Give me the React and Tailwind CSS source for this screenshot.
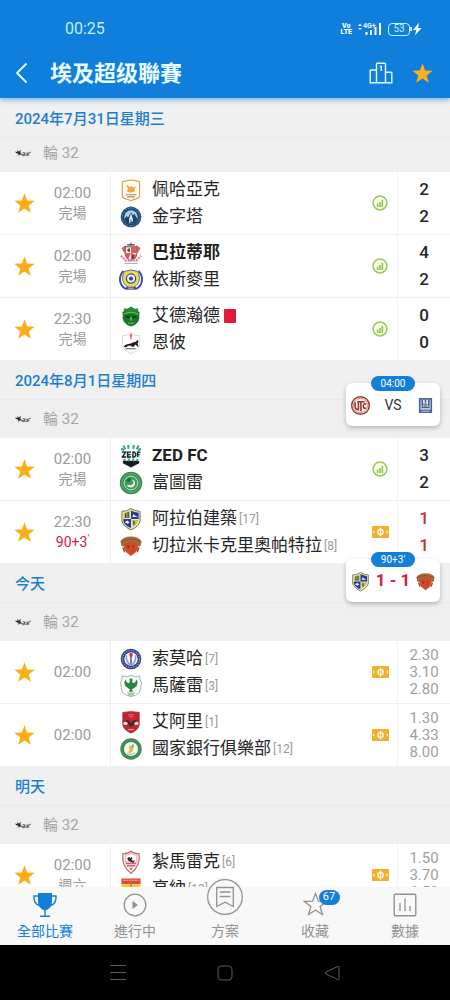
import React from "react";

const STAR = "M12 1.4l2.750 7.400 7.850.3-6.150 4.900 2.150 7.600L12 17.300 5.400 21.600l2.150-7.600L1.400 9.100l7.850-.3z";

function Star({ className }) {
  return (
    <svg viewBox="0 0 24 24" className={className} aria-hidden="true">
      <path d={STAR} fill="#fcae18" />
    </svg>
  );
}

const crests = {
  pharco: (
    <>
      <path d="M3 3.500Q12 0 21 3.500V18q0 2.500-3 3l-6 2-6-2q-3-.5-3-3z" fill="#fffdf8" stroke="#dda646" strokeWidth="1.300" />
      <path d="M7 6.500c2 .5 3 2 4 3l1-2 2 1.500 3.500-.5-2 2.500 1 2-3 1.500h-4L7 12.500l2-1z" fill="#f2a83a" />
      <path d="M6.500 17h11M8 19.200h8" stroke="#8f8a80" strokeWidth="1.100" />
    </>
  ),
  pyramids: (
    <>
      <circle cx="12" cy="12" r="10.800" fill="#1d4571" />
      <circle cx="12" cy="12" r="9.200" fill="none" stroke="#7796b8" strokeWidth="1" strokeDasharray="1.500 1" />
      <circle cx="12" cy="12" r="7" fill="#a9d2f2" />
      <path d="M5.300 14l2.200-3 1.500 1.500L12 7l2 3.500 1.500-2 3.200 5.500a7 7 0 0 1-13.400 0z" fill="#1c416c" />
      <path d="M10 14l2-6 2 6v3h-1.500v-2h-1v3H10z" fill="#dcebf8" />
      <circle cx="12" cy="1.300" r="1" fill="#6d7f99" />
    </>
  ),
  baladiyat: (
    <>
      <path d="M12 0l1.500 4h-3zM2 7l4-3 3 3-4 5zM22 7l-4-3-3 3 4 5z" fill="#d9636a" />
      <path d="M6 5.500h12V14q0 4-6 6-6-2-6-6z" fill="#fbeeee" stroke="#6c4347" strokeWidth="1" />
      <path d="M12 5.500V12H6v2q1 3 3 4.500L12 12h6V5.500zM12 12v8q5-2 6-6z" fill="#dc5a61" />
      <path d="M8 3.500h8M10 7v4M8 9h3M14 14v4" stroke="#3c3436" strokeWidth="1.300" />
      <path d="M1.500 15l5 5h11l5-5" fill="none" stroke="#df8388" strokeWidth="2.400" strokeDasharray="2 1" />
      <path d="M5 22.800h14" stroke="#a498c4" strokeWidth="1" />
    </>
  ),
  ismaily: (
    <>
      <path d="M4 2.500C-1.500 9-.5 17 6 21h12c6.500-4 7.500-12 2-18.500" fill="none" stroke="#3d4fa5" strokeWidth="2" />
      <path d="M5 3c-3.500 7-2 13 4 16.500h6c6-3.500 7.500-9.500 4-16.500l-7-1.500z" fill="#e9dd48" stroke="#4f61a4" strokeWidth="1" />
      <circle cx="12" cy="10.500" r="4.800" fill="#f4f6fc" stroke="#31479d" strokeWidth="1.300" />
      <path d="M12 8l2.400 1.800-.9 2.800h-3l-.9-2.800z" fill="#31479d" />
      <path d="M7 20.500h10" stroke="#31479d" strokeWidth="2.500" />
      <path d="M9 20.500h6" stroke="#e7dc58" strokeWidth="1" />
    </>
  ),
  masry: (
    <>
      <path d="M5 4l3 .5L12 2l4 2.500 3-.5 1 4H4z" fill="#2a8a36" />
      <path d="M3 7.500h18l-.5 5 .5 1-1.500 4.500Q17 21.500 12 23q-5-1.500-7.500-5L3 13.500l.5-1z" fill="#15762a" />
      <path d="M4.500 10q7.500-3.500 15 0" fill="none" stroke="#5fba55" strokeWidth="1.300" />
      <path d="M6.500 13q2-1 4 1M17.500 13q-2-1-4 1" stroke="#083e12" strokeWidth="2" />
      <path d="M8 17.500q4 2.500 8 0l-1 2.500-3 1-3-1z" fill="#4da646" />
      <path d="M12 13v4" stroke="#8fd27c" strokeWidth="1.200" />
    </>
  ),
  enppi: (
    <>
      <path d="M3 4.500q5 0 9-3 4 3 9 3V15q-1 5-9 8-8-3-9-8z" fill="#fff" stroke="#d6d6d6" />
      <path d="M11.300 3l.7-1.500.7 1.500 1 1.500-1 1V8h-1.400V5.500l-1-1z" fill="#d9644d" />
      <path d="M4 16q1.500-2.500 5-3 3 0 5-1.500l3-.8 2-2 .8 2-1 1.500 1.200 4.300-2-1.500-1.500-1.500-1.500 2.500h-3l1-1.200-4 .2-2 1.500z" fill="#1d1d1f" />
      <path d="M6 18h11" stroke="#6f6f72" strokeWidth="1.200" />
    </>
  ),
  zed: (
    <>
      <path d="M4 1l2 4M9 .5l.5 4M15 .5l-.5 4M20 1l-2 4M1.500 4.500L5 6M22.500 4.500L19 6" stroke="#3ba883" strokeWidth="2.200" />
      <path d="M3.500 17h17v2.500L12 24l-8.500-4.500z" fill="#161b1b" />
      <path d="M1.500 7h21v7h-21z" fill="#e2f4ec" />
      <path d="M2.500 8h4l-3.500 5h4M12 8H8.500v5H12M8.500 10.500h3M14 8v5h1.500l1.500-1.500v-2L15.500 8zM22 8h-3v5M19 10.500h2" fill="none" stroke="#152220" strokeWidth="1.400" />
      <path d="M5 15l1 2M9.500 14.500l.5 3M14.500 14.500l-.5 3M19 15l-1 2" stroke="#3ba883" strokeWidth="2" />
    </>
  ),
  future: (
    <>
      <circle cx="12" cy="12" r="11.700" fill="#368a50" />
      <circle cx="12" cy="12" r="9.700" fill="none" stroke="#6db881" strokeWidth="1" />
      <circle cx="12" cy="12" r="7.200" fill="#3f9d59" stroke="#cfe8d5" strokeWidth="1" />
      <path d="M7.500 14c2 3.500 7 3.500 8.500 0 1-3-.5-5.500-3-5.500l1.300 2.200c.3 2-.8 3.300-2.300 3.300z" fill="#e4f5e8" />
      <path d="M7 9l3.500-3 1.500 2.500-2.500 3z" fill="#1c6d38" />
    </>
  ),
  arab: (
    <>
      <path d="M2.500 4q5.500 0 9.500-3 4 3 9.500 3v10q-1 5.500-9.500 9.500-8.500-4-9.500-9.500z" fill="#ece7ae" stroke="#6b7350" />
      <path d="M12 3q3.500 2 8 2.500V12h-8zM4 12h8v9.500Q5 18.500 4 14z" fill="#273b9c" />
      <path d="M4.500 5.500q4-.3 6.500-2V11H4.500zM13 13h6.500q-.5 4.500-5.500 7z" fill="#c6bd58" />
      <path d="M6.500 6v5M9 5v6M15 14v4" stroke="#333d4e" strokeWidth="1.300" />
      <path d="M13.500 10l1-3 2 1.500 2.500 1.500zM5.500 15.500l2.500-2 2.500 2-2 1.500z" fill="#f3f5fc" />
    </>
  ),
  cleopatra: (
    <>
      <path d="M1 7q3-5 11-5t11 5l-1 5-4 1v-3H6v3l-4-1z" fill="#a8693a" />
      <path d="M2 7.500q10-5 20 0" fill="none" stroke="#6b5a42" strokeWidth="1.300" strokeDasharray="2 1" />
      <path d="M5.500 9q6.500-3 13 0l1 6-3 4-4.500 3.500L7.500 19l-3-4z" fill="#d24a2e" />
      <path d="M8 11l3 1-1 3-2-1zM16 11l-3 1 2 4-3 3" fill="#9c3424" />
      <path d="M3.500 13.500l2 5M20.500 13.500l-2 5" stroke="#9a4a2d" strokeWidth="1.500" />
    </>
  ),
  smouha: (
    <>
      <circle cx="12" cy="12" r="10.800" fill="#343f88" />
      <circle cx="12" cy="12" r="8.900" fill="none" stroke="#9ba3cc" strokeWidth="1.200" strokeDasharray="1.400 1.200" />
      <circle cx="12" cy="12" r="7" fill="#f5f7fd" />
      <path d="M7 8q0 9 5 10 5-1 5-10" fill="none" stroke="#7c9acb" strokeWidth="1.600" />
      <path d="M12 10v7" stroke="#3b437d" strokeWidth="1.400" />
      <path d="M12 5l2 2-1 3h-2l-1-3z" fill="#d6344c" />
    </>
  ),
  masri: (
    <>
      <path d="M3 1.500q4 2 9-.5 5 2.500 9 .5 0 4 2 7-1 7-2 10-4 4-9 4.500-5-.5-9-4.500Q2 15 1 8.500q2-3 2-7z" fill="#fff" stroke="#8cba94" strokeWidth="1" />
      <path d="M12 4l1.800 1.300-.8 2 1.500 1.700 2-1 1-3 1.500 3-1 4-3.500 2.500-1.500 1 1 2.500h-4l1-2.500-1.500-1L6 12 5 8l1.500-3 1 3 2 1L11 7.300l-.8-2z" fill="#26863e" />
      <path d="M8 19.500h8M9 21.300h6" stroke="#63a474" strokeWidth="1" />
    </>
  ),
  ahly: (
    <>
      <path d="M3.500 2Q12 .5 20.500 2v13q-1 5.500-8.500 8.500-7.500-3-8.500-8.500z" fill="#c42331" stroke="#a02b38" strokeWidth="1" />
      <path d="M9 4.500h6M10 6.500h4" stroke="#e8747c" strokeWidth="1" />
      <path d="M6 10l3.500.5 2.500 3 2.500-3L18 10l-1.500 3-2 1.500-1 2h-3l-1-2-2-1.500z" fill="#3b2a2e" />
      <ellipse cx="6.300" cy="13.500" rx="2.200" ry="1.700" fill="#f3dede" />
      <ellipse cx="17.700" cy="13.500" rx="2.200" ry="1.700" fill="#f3dede" />
      <path d="M9 20h6" stroke="#f0b3b6" strokeWidth="1" />
    </>
  ),
  bank: (
    <>
      <circle cx="12" cy="12" r="11.200" fill="#3c8750" />
      <circle cx="12" cy="12" r="9.500" fill="none" stroke="#64a375" strokeWidth=".9" strokeDasharray="1.500 1" />
      <circle cx="12" cy="12" r="7.400" fill="#f8faef" />
      <path d="M9.500 8l2.500 1.500L14.500 7l-1 4 1 2.500-3 3-2.500-1 1.500-2.500z" fill="#e0b958" />
      <path d="M13 8l1.500-1.500L15 10l-2 2z" fill="#7aa86a" />
      <path d="M8 16.500q4 3 8-1" fill="none" stroke="#8ab792" strokeWidth="1" />
    </>
  ),
  zamalek: (
    <>
      <path d="M12 .8q2 2.200 8.500 2.700 1.500 13-8.500 20.200Q2 16.500 3.500 3.500 10 3 12 .8z" fill="#fbf3f3" stroke="#c56871" strokeWidth="1.300" />
      <path d="M6 5q4-.5 6-2 2 1.500 6 2l.2 7H5.800z" fill="#fff" stroke="#d99299" strokeWidth=".8" />
      <path d="M8 8.500l2-2 1.500 1.500 1-1.500 1 2-1 1 1.500 1.500 2-1-1.500 3-3.500-1.500-2-1z" fill="#2b2427" />
      <path d="M6.500 13.500h11M7.500 16h9" stroke="#d0626b" strokeWidth="1.600" />
      <path d="M10 18l2 3 2-3z" fill="#cf6670" />
    </>
  ),
  gouna: (
    <>
      <path d="M2 1h20v6H2z" fill="#e2483c" />
      <path d="M2 7h20v10q-4 5-10 6-6-1-10-6z" fill="#f6cb32" />
      <path d="M4 3h16" stroke="#f4a79d" strokeWidth="1.500" strokeDasharray="2 1" />
      <path d="M12 5v9" stroke="#a67c1f" strokeWidth="1.500" />
    </>
  ),
  utc: (
    <>
      <circle cx="12" cy="12" r="10.700" fill="#fff6f2" stroke="#97382f" strokeWidth="1.800" />
      <circle cx="12" cy="12" r="8.600" fill="none" stroke="#ad5a50" strokeWidth=".8" />
      <path d="M5.500 8v5q0 4 4 4V8M8 7.500h9M12.500 8v11M19 10.500q-3.500-2-3.500 2t3.500 2.500" fill="none" stroke="#973329" strokeWidth="1.900" />
    </>
  ),
  alianza: (
    <>
      <path d="M4 3h16v18H4z" fill="#4a6290" />
      <path d="M6 5h12v12H6z" fill="#dfe7f4" />
      <path d="M8 5v8M12 5v3M16 5v8M7 14.500h10" stroke="#415888" strokeWidth="1.800" />
      <path d="M9 10l3-2 3 3-2 3h-3z" fill="#80929f" />
      <path d="M7 19h10" stroke="#b4c0d9" strokeWidth="1.300" />
    </>
  ),
};

function Crest({ id, className }) {
  return (
    <svg viewBox="0.5 0.5 23 23" className={className} overflow="visible" aria-hidden="true">
      {crests[id]}
    </svg>
  );
}

function StatsIcon() {
  return (
    <svg viewBox="0 0 16 16" className="size-4" aria-hidden="true">
      <circle cx="8" cy="8" r="6.900" fill="#fbfff2" stroke="#9acb58" strokeWidth="1.500" />
      <path d="M5.600 8.500v3.500M8 7v5M10.400 4.800V12" stroke="#8cc63f" strokeWidth="1.600" />
    </svg>
  );
}

function PitchIcon() {
  return (
    <svg viewBox="0 0 17 12" className="h-3 w-[17px]" aria-hidden="true">
      <rect width="17" height="12" rx="1" fill="#eeb02f" />
      <circle cx="8.500" cy="6" r="2.600" fill="none" stroke="#fff6da" strokeWidth="1.500" />
      <path d="M8.500 1.500v9M1.800 4.700v2.600M15.200 4.700v2.600" stroke="#fff6da" strokeWidth="1.200" />
    </svg>
  );
}

function LeagueMark() {
  return (
    <svg viewBox="0 0 16 8" className="h-2 w-4" aria-hidden="true">
      <path d="M0 2.500l2.500.5L2.300 1l1.700 1.500L6 .8 5.300 3.200 7.500 6.500 5 5.200 3.500 7 3.300 4.800 1 4z" fill="#2f2f2f" />
      <path d="M7.500 3.700h2v3h-2v-1.300h2M11 3.700v3M11 6.500h1.500v-2.800M13.700 6.700v-3H15M15 3.200h1" fill="none" stroke="#5a5a5a" strokeWidth=".9" />
    </svg>
  );
}

const sections = [
  {
    date: "2024年7月31日星期三",
    matches: [
      { time: "02:00", status: "完場", home: ["pharco", "佩哈亞克"], away: ["pyramids", "金字塔"], score: ["2", "2"] },
      { time: "02:00", status: "完場", home: ["baladiyat", "巴拉蒂耶"], away: ["ismaily", "依斯麥里"], score: ["4", "2"], winner: true },
      { time: "22:30", status: "完場", home: ["masry", "艾德瀚德"], away: ["enppi", "恩彼"], score: ["0", "0"], redCard: true },
    ],
  },
  {
    date: "2024年8月1日星期四",
    matches: [
      { time: "02:00", status: "完場", home: ["zed", "ZED FC"], away: ["future", "富圖雷"], score: ["3", "2"], winner: true },
      { time: "22:30", status: "90+3", live: true, home: ["arab", "阿拉伯建築", "[17]"], away: ["cleopatra", "切拉米卡克里奧帕特拉", "[8]"], score: ["1", "1"] },
    ],
  },
  {
    date: "今天",
    matches: [
      { time: "02:00", home: ["smouha", "索莫哈", "[7]"], away: ["masri", "馬薩雷", "[3]"], odds: ["2.30", "3.10", "2.80"] },
      { time: "02:00", home: ["ahly", "艾阿里", "[1]"], away: ["bank", "國家銀行俱樂部", "[12]"], odds: ["1.30", "4.33", "8.00"] },
    ],
  },
  {
    date: "明天",
    matches: [
      { time: "02:00", status: "週六", home: ["zamalek", "紮馬雷克", "[6]"], away: ["gouna", "高納", "[13]"], odds: ["1.50", "3.70", "6.50"] },
    ],
  },
];

function Team({ team, bold, redCard }) {
  const [crest, name, rank] = team;
  return (
    <div className="flex h-[27px] items-center whitespace-nowrap">
      <Crest id={crest} className="size-[22px] shrink-0" />
      <span className={bold ? "ml-2.5 text-[17px] font-bold text-[#1f1f1f]" : "ml-2.5 text-[17px] text-[#262626]"}>{name}</span>
      {rank && <span className="ml-0.5 text-xs text-[#9b9b9b]">{rank}</span>}
      {redCard && <span className="ml-1 h-3.5 w-3 rounded-[1px] bg-[#e01b36]" />}
    </div>
  );
}

function Match({ match }) {
  return (
    <li className="flex items-stretch bg-white">
      <button type="button" aria-label="收藏" className="flex w-12 shrink-0 items-center justify-center">
        <Star className="size-[23px]" />
      </button>
      <div className="flex w-[63px] shrink-0 flex-col items-center justify-center border-r border-[#f0f0f0] pr-[13px] text-[#9a9a9a]">
        <span className="text-[15px] leading-5">{match.time}</span>
        {match.status && (
          <span className={match.live ? "text-sm leading-5 text-[#d5203c]" : "text-sm leading-5"}>
            {match.status}
            {match.live && <sup className="text-[10px]">'</sup>}
          </span>
        )}
      </div>
      <div className="min-w-0 flex-1 py-1 pl-[9px]">
        <Team team={match.home} bold={match.winner} redCard={match.redCard} />
        <Team team={match.away} />
      </div>
      <div className="flex w-9 shrink-0 items-center justify-center pl-0.5">
        {match.score && !match.live ? <StatsIcon /> : <PitchIcon />}
      </div>
      <div className="flex w-[53px] shrink-0 flex-col items-center justify-center border-l border-[#f4f4f4]">
        {match.score
          ? match.score.map((value, i) => (
              <span key={i} className={match.live ? "text-[17px] leading-[27px] font-medium text-[#d5203c]" : "text-[17px] leading-[27px] font-medium text-[#262626]"}>
                {value}
              </span>
            ))
          : match.odds.map((value) => (
              <span key={value} className="text-[15px] leading-[17px] text-[#a0a0a0]">{value}</span>
            ))}
      </div>
    </li>
  );
}

function Section({ section, first }) {
  return (
    <section>
      <h2 className="relative flex h-10 items-center border-b border-[#e9e9e9] bg-[#f0f0f0] px-[15px] pt-1 text-[15px] font-medium text-[#1c7dd0]">
        {section.date}
      </h2>
      <div className={first ? "-mt-1 flex h-[38px] items-center gap-3 bg-[#efefef] px-[15px] text-[15px] text-[#a6a6a6]" : "flex h-[38px] items-center gap-3 bg-[#efefef] px-[15px] text-[15px] text-[#a6a6a6]"}>
        <LeagueMark />
        <span>輪 32</span>
      </div>
      <ul className="divide-y divide-[#efefef]">
        {section.matches.map((match, i) => (
          <Match key={i} match={match} />
        ))}
      </ul>
    </section>
  );
}

function FloatingCard({ label, home, away, children }) {
  return (
    <button type="button" className="relative flex h-[43px] w-[94px] items-center justify-between rounded-md bg-white px-[5px] pt-px shadow-[0_2px_5px_rgba(0,0,0,0.24)]">
      <span className="absolute -top-[7px] left-1/2 flex h-[15px] w-11 -translate-x-1/2 items-center justify-center rounded-full bg-[#137fd9] text-[10px] text-white">
        {label}
      </span>
      <Crest id={home} className="size-[19px]" />
      {children}
      <Crest id={away} className="size-[19px]" />
    </button>
  );
}

function StatusBar() {
  return (
    <div className="flex h-12 items-center justify-between pt-2.5 pr-7 pl-[65px] text-base text-[#c5f0ff]">
      <time>00:25</time>
      <div className="flex items-center gap-1.5">
        <span className="flex flex-col text-center text-[7px] leading-[6px] font-black text-white">
          <span>Vo</span>
          <span>LTE</span>
        </span>
        <svg viewBox="0 0 24 14" className="h-3.5 w-6" aria-label="4G">
          <path d="M0 4l2-2.500L4 4zM0 6h4L2 8z" fill="#d9f3ff" />
          <text x="5" y="6" fontSize="7" fontWeight="700" fontFamily="Roboto, sans-serif" fill="#e6f7ff">4G+</text>
          <path d="M8.500 10v3M13 8v5M17.500 5v8M22 1v12" stroke="#fff" strokeWidth="2" />
        </svg>
        <div className="flex items-center">
          <span className="flex h-[13px] w-[22px] items-center justify-center rounded-[4px] border border-[#c5f0ff] text-[10px] leading-none">53</span>
          <span className="h-1 w-0.5 bg-[#c5f0ff]" />
          <svg viewBox="0 0 10 14" className="h-3.5 w-2.5" aria-hidden="true">
            <path d="M7 .5L1 8h3.300L3 13.500 9.500 6H6z" fill="#fff" />
          </svg>
        </div>
      </div>
    </div>
  );
}

function TabItem({ label, active, children }) {
  return (
    <a href="#" className={active ? "flex flex-1 flex-col items-center text-[#137fd9]" : "flex flex-1 flex-col items-center text-[#929292]"}>
      <span className="flex h-[35px] items-center justify-center">{children}</span>
      <span className="text-sm leading-[18px]">{label}</span>
    </a>
  );
}

function TabBar() {
  return (
    <nav className="relative flex h-[58px] shrink-0 bg-[#f8f8f8]">
      <TabItem label="全部比賽" active>
        <svg viewBox="0 0 26 26" className="size-[26px]" aria-hidden="true">
          <path d="M6 1h14v9q0 6.500-7 8.500Q6 16.500 6 10z" fill="currentColor" />
          <path d="M6 4H2q-.5 8 5.500 9.500M20 4h4q.5 8-5.500 9.500" fill="none" stroke="currentColor" strokeWidth="1.400" />
          <path d="M13 17v7M8 24.300h10" stroke="currentColor" strokeWidth="1.400" />
        </svg>
      </TabItem>
      <TabItem label="進行中">
        <svg viewBox="0 0 24 24" className="size-6" aria-hidden="true">
          <circle cx="12" cy="12" r="10.800" fill="none" stroke="currentColor" strokeWidth="1.300" />
          <path d="M9.500 8v8l5.500-4z" fill="currentColor" />
        </svg>
      </TabItem>
      <TabItem label="方案">
        <span className="-mt-4 flex size-10 items-center justify-center rounded-full bg-[#f8f8f8]">
          <svg viewBox="0 0 36 36" className="size-9" aria-hidden="true">
            <circle cx="18" cy="18" r="17.300" fill="none" stroke="currentColor" strokeWidth="1.300" />
            <path d="M9.700 8.500h16.600v19L18 23.200l-8.300 4.300zM12.700 13h10.600M12.700 17.500h10.600" fill="none" stroke="currentColor" strokeWidth="1.300" />
          </svg>
        </span>
      </TabItem>
      <TabItem label="收藏">
        <span className="relative">
          <svg viewBox="0 0 24 24" className="size-[25px]" aria-hidden="true">
            <path d={STAR} fill="none" stroke="currentColor" strokeWidth="1.300" />
          </svg>
          <span className="absolute -top-0.5 left-4 flex h-[15px] w-[21px] items-center justify-center rounded-full bg-[#137fd9] text-[11px] text-white">67</span>
        </span>
      </TabItem>
      <TabItem label="數據">
        <svg viewBox="0 0 24 24" className="size-6" aria-hidden="true">
          <rect x="1.200" y="1.200" width="21.600" height="21.600" rx="1.200" fill="none" stroke="currentColor" strokeWidth="1.400" />
          <path d="M7 10v8M12 5.500V18M17 13v5" stroke="currentColor" strokeWidth="1.300" />
        </svg>
      </TabItem>
    </nav>
  );
}

function SystemBar() {
  return (
    <div className="flex h-[55px] shrink-0 items-center justify-center gap-[91px] bg-black text-[#5c5c5c]">
      <button type="button" aria-label="Menu">
        <svg viewBox="0 0 16 16" className="size-4"><path d="M0 .5h16M0 7.500h16M0 14.500h16" stroke="currentColor" /></svg>
      </button>
      <button type="button" aria-label="Home">
        <svg viewBox="0 0 16 16" className="size-4"><rect x="1" y="1" width="14" height="14" rx="3.500" fill="none" stroke="currentColor" /></svg>
      </button>
      <button type="button" aria-label="Back">
        <svg viewBox="0 0 16 16" className="size-4"><path d="M15 2.200v11.600q0 1.200-1.200.8L2 9q-1.500-1 0-2l11.800-5.600q1.200-.4 1.200.8z" fill="none" stroke="currentColor" /></svg>
      </button>
    </div>
  );
}

export default function App() {
  return (
    <div className="flex h-dvh flex-col overflow-hidden bg-white font-['Roboto','Noto_Sans_CJK_TC',sans-serif]">
      <header className="relative z-10 shrink-0 bg-[#107fdc] shadow-[0_2px_5px_rgba(16,127,220,0.55)]">
        <StatusBar />
        <div className="flex h-[50px] items-center pr-4 pl-[15px] text-[#e8fbff]">
          <button type="button" aria-label="返回">
            <svg viewBox="0 0 14 22" className="h-[22px] w-3.5" aria-hidden="true">
              <path d="M11.500 1.500L2 11l9.500 9.500" fill="none" stroke="currentColor" strokeWidth="1.900" />
            </svg>
          </button>
          <h1 className="ml-[21px] flex-1 text-[22px] font-bold">埃及超级聯賽</h1>
          <button type="button" aria-label="排名">
            <svg viewBox="0 0 24 22" className="h-[22px] w-6" aria-hidden="true">
              <path d="M7.500 20.800V2q0-.8.8-.8h7.400q.8 0 .8.8v18.800M7.500 8H2q-.8 0-.8.8v12h21.600V11q0-.8-.8-.8h-5.500M10.800 4.500h1.500V9" fill="none" stroke="currentColor" strokeWidth="1.400" />
            </svg>
          </button>
          <button type="button" aria-label="收藏" className="ml-[18px]">
            <Star className="size-[23px]" />
          </button>
        </div>
      </header>
      <div className="relative flex min-h-0 flex-1 flex-col">
        <main className="min-h-0 flex-1 overflow-y-auto [scrollbar-width:none]">
          {sections.map((section, i) => (
            <Section key={section.date} section={section} first={i === 0} />
          ))}
        </main>
        <aside className="absolute top-[285px] right-[10px] flex flex-col gap-[133px]">
          <FloatingCard label="04:00" home="utc" away="alianza">
            <span className="text-sm text-[#333]">VS</span>
          </FloatingCard>
          <FloatingCard label="90+3'" home="arab" away="cleopatra">
            <span className="text-[17px] font-bold text-[#d5203c]">1 - 1</span>
          </FloatingCard>
        </aside>
      </div>
      <TabBar />
      <SystemBar />
    </div>
  );
}
